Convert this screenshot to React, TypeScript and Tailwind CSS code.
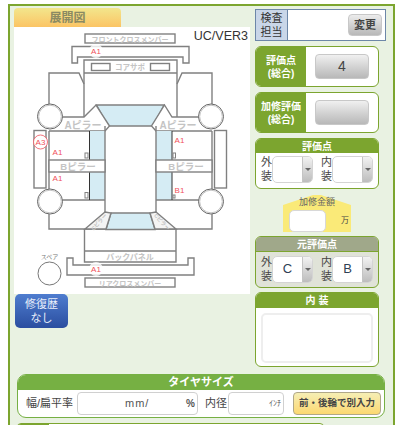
const font = { fontFamily: '"Liberation Sans", "Noto Sans CJK JP", sans-serif' };

function Select({ value }: { value?: string }) {
  return (
    <div className="flex h-[27px] w-[41px] shrink-0 overflow-hidden rounded-[5px] border border-[#d4d4d4] bg-white">
      <div className="flex flex-1 items-center justify-center text-[13px] text-[#2f3f55]">{value}</div>
      <div className="flex w-[10px] items-center justify-center border-l border-[#c4c4c4] bg-gradient-to-b from-[#f2f2f2] to-[#bdbdbd]">
        <div className="h-0 w-0 border-x-[3px] border-t-[3px] border-x-transparent border-t-[#666]" />
      </div>
    </div>
  );
}

function ScoreCard({ label, value }: { label: React.ReactNode; value?: string }) {
  return (
    <div className="flex h-[41px] w-[124px] overflow-hidden rounded-[6px] border border-[#7ca52f] bg-white">
      <div className="flex w-[50px] items-center justify-center bg-[#7ca52f] text-center text-[10px] font-bold leading-[13px] text-white">
        {label}
      </div>
      <div className="flex flex-1 items-center justify-center">
        <div className="flex h-[25px] w-[54px] items-center justify-center rounded-[4px] border border-[#c8c8c8] bg-gradient-to-b from-[#f0f0f0] to-[#b8b8b8] text-[14px] text-[#444]">
          {value}
        </div>
      </div>
    </div>
  );
}

function SelectPair({ outer, inner }: { outer?: string; inner?: string }) {
  return (
    <div className="flex items-center pl-[5px]">
      <span className="w-[11px] text-[11px] leading-[14px] text-[#444]">外装</span>
      <Select value={outer} />
      <span className="ml-[8px] w-[11px] text-[11px] leading-[14px] text-[#444]">内装</span>
      <Select value={inner} />
    </div>
  );
}

function Diagram() {
  const line = { fill: "none", stroke: "#808080", strokeWidth: 1.4 };
  const label = { fill: "#c4c4c4", fontWeight: 700, textAnchor: "middle" as const };
  const red = { fill: "#f0505a", fontSize: 8, textAnchor: "middle" as const };
  return (
    <svg width="236" height="267" viewBox="14 27 236 267" style={font}>
      {/* front */}
      <rect x="85" y="34" width="90" height="9" {...line} />
      <text x="130" y="41.5" fontSize="7" {...label}>フロントクロスメンバー</text>
      <path d="M72 63V46.5H189V63H183V57H77.5V63Z" {...line} />
      <path d="M84 118V60H177V118M84 73H177" {...line} />
      <rect x="91.5" y="63.5" width="18.5" height="7" {...line} />
      <rect x="150.5" y="63.5" width="19" height="7" {...line} />
      <text x="130" y="70" fontSize="7.5" {...label}>コアサポ</text>
      <path d="M84 84L79 73H49V104M177 84L182 73H212V104" {...line} />

      {/* windshield, pillars */}
      <path d="M96.5 105H164L153 126H108Z" fill="#d5ecf4" stroke="#808080" strokeWidth="1.4" />
      <path d="M62 117H84L96 105L109.5 126L105 131H49" fill="#fff" stroke="#808080" strokeWidth="1.4" />
      <path d="M199 117H172L164.5 105L151.5 126L156 131H212" fill="#fff" stroke="#808080" strokeWidth="1.4" />
      <text x="83" y="129" fontSize="10" {...label}>Aピラー</text>
      <text x="178" y="129" fontSize="10" {...label}>Aピラー</text>

      {/* sides */}
      <rect x="90" y="131" width="15" height="69" fill="#d5ecf4" />
      <rect x="156" y="131" width="16" height="69" fill="#d5ecf4" />
      <path d="M49 131V200H105M105 126V212M212 131V200H156M156 126V212" {...line} />
      <path d="M89.5 131V200M172 131V200" fill="none" stroke="#333" strokeWidth="1" />
      <rect x="49" y="160" width="56" height="12" fill="#fff" stroke="#808080" strokeWidth="1.4" />
      <rect x="156" y="160" width="56" height="12" fill="#fff" stroke="#808080" strokeWidth="1.4" />
      <text x="78" y="170" fontSize="9.5" {...label}>Bピラー</text>
      <text x="186" y="170" fontSize="9.5" {...label}>Bピラー</text>
      <rect x="85" y="153" width="3" height="5" fill="none" stroke="#808080" strokeWidth="1" />
      <rect x="85" y="192.5" width="3" height="5.5" fill="none" stroke="#808080" strokeWidth="1" />
      <rect x="173" y="153" width="2.5" height="5" fill="none" stroke="#808080" strokeWidth="1" />
      <rect x="173" y="195" width="2" height="3" fill="none" stroke="#808080" strokeWidth="1" />
      <rect x="34" y="130.5" width="12" height="57.5" {...line} />
      <rect x="214.5" y="130.5" width="12" height="57.5" {...line} />

      {/* wheels */}
      {[[50, 116.5], [211, 116.5], [50, 201.5], [211, 201.5]].map(([cx, cy]) => (
        <g key={`${cx}-${cy}`}>
          <circle cx={cx} cy={cy} r="12.5" fill="#fff" stroke="#666" strokeWidth="1" />
          <circle cx={cx} cy={cy} r="11.3" fill="none" stroke="#aaa" strokeWidth="0.7" />
        </g>
      ))}

      {/* rear */}
      <path d="M49 214V229H212V214" {...line} />
      <path d="M111 213H150L155 229.5H106Z" fill="#d5ecf4" stroke="#808080" strokeWidth="1.4" />
      <path d="M105 212L111 213L106 229H85Z" fill="#f4f4f4" stroke="#808080" strokeWidth="1.4" />
      <path d="M156 212L150 213L155 229H176Z" fill="#f4f4f4" stroke="#808080" strokeWidth="1.4" />
      <text x="99" y="224" fontSize="5.5" transform="rotate(-48 99 222)" {...label}>Cピラー</text>
      <text x="162" y="224" fontSize="5.5" transform="rotate(48 162 222)" {...label}>Cピラー</text>
      <path d="M84.5 229V262H176V229M84.5 251H176" {...line} />
      <text x="130" y="260" fontSize="8" {...label}>バックパネル</text>
      <path d="M67 258H73V265H188V258H194V275H67Z" fill="#fff" stroke="#808080" strokeWidth="1.4" />
      <rect x="85" y="278" width="90" height="9" {...line} />
      <text x="130" y="285.5" fontSize="7" {...label}>リアクロスメンバー</text>
      <circle cx="49.5" cy="273.5" r="11.5" fill="#fff" stroke="#777" strokeWidth="1" />
      <text x="49.5" y="259" fontSize="6" fill="#777" textAnchor="middle">スペア</text>

      {/* marks */}
      <circle cx="96" cy="51" r="7" fill="#fff" opacity="0.8" />
      <circle cx="96" cy="269" r="7" fill="#fff" opacity="0.8" />
      <text x="96" y="54" {...red}>A1</text>
      <circle cx="40.5" cy="142" r="7" fill="#fff" stroke="#f0505a" strokeWidth="0.8" />
      <text x="40.5" y="145" {...red}>A3</text>
      <text x="57.5" y="155" {...red}>A1</text>
      <text x="179.5" y="143" {...red}>A1</text>
      <text x="57.5" y="181" {...red}>A1</text>
      <text x="179.5" y="193" {...red}>B1</text>
      <text x="96" y="272" {...red}>A1</text>
    </svg>
  );
}

export default function App() {
  return (
    <div className="h-[425px] w-[402px] overflow-hidden bg-white" style={font}>
      <div className="ml-2 mt-1 h-[500px] w-[387px] border-2 border-[#7ca52f] bg-[#e9f2e2] pl-[4px] pt-[2px]">
        <div className="flex items-start">
          {/* left */}
          <div className="w-[236px]">
            <div className="flex h-[19px] w-[107px] items-center justify-center rounded-t-[4px] bg-gradient-to-b from-[#f2e68c] to-[#fbc464] text-[12px] font-bold text-[#8a8a62]">
              展開図
            </div>
            <div className="relative bg-white">
              <Diagram />
              <span className="absolute right-[2px] top-0 text-[12.5px] text-[#333]">UC/VER3</span>
            </div>
            <div className="ml-px flex h-[34px] w-[53px] flex-col items-center justify-center rounded-[5px] bg-gradient-to-b from-[#4f7dcf] to-[#2b4ea0] text-[11px] leading-[14px] text-[#e8eefa]">
              <span>修復歴</span>
              <span>なし</span>
            </div>
          </div>

          {/* right */}
          <div className="ml-[5px] flex flex-col pt-[1px]">
            <div className="flex h-[32px] w-[131px] border border-[#6d87a8] bg-white">
              <div className="flex w-[32px] items-center justify-center border-r border-[#6d87a8] bg-[#c9d6e8] text-center text-[11px] leading-[14px] text-[#333]">
                検査担当
              </div>
              <div className="flex flex-1 items-center justify-end pr-[3px]">
                <div className="flex h-[22px] w-[34px] items-center justify-center rounded-[4px] border border-[#c8c8c8] bg-gradient-to-b from-[#ececec] to-[#b8b8b8] text-[11px] font-bold text-[#444]">
                  変更
                </div>
              </div>
            </div>
            <div className="mt-[5px]">
              <ScoreCard label={<>評価点<br />(総合)</>} value="4" />
            </div>
            <div className="mt-[5px]">
              <ScoreCard label={<>加修評価<br />(総合)</>} />
            </div>

            <div className="mt-[5px] h-[51px] w-[124px] overflow-hidden rounded-[6px] border border-[#7ca52f] bg-white">
              <div className="flex h-[14px] items-center justify-center bg-[#7ca52f] text-[10px] font-bold text-white">評価点</div>
              <div className="pt-[2px]"><SelectPair /></div>
            </div>

            <div className="relative mt-[6px] ml-[28px] h-[37px] w-[68px]">
              <svg className="absolute inset-0" width="68" height="37" viewBox="0 0 68 37">
                <path d="M0 10L30 0H38L68 10V37H0Z" fill="#faea78" />
              </svg>
              <div className="relative flex h-full flex-col items-center">
                <span className="pt-[1px] text-[9px] leading-[13px] text-[#666]">加修金額</span>
                <div className="flex w-full items-center pl-[6px] pt-px">
                  <div className="h-[22px] w-[37px] rounded-[5px] border border-[#d8d8d8] bg-white" />
                  <span className="ml-[15px] text-[8px] text-[#444]">万</span>
                </div>
              </div>
            </div>

            <div className="mt-[4px] h-[52px] w-[124px] overflow-hidden rounded-[6px] border border-[#7ca52f] bg-[#e0e3d8]">
              <div className="flex h-[14px] items-center justify-center bg-[#a0a88a] text-[10px] font-bold text-white">元評価点</div>
              <div className="border-t border-[#7ca52f] pt-[3px]"><SelectPair outer="C" inner="B" /></div>
            </div>

            <div className="mt-[4px] h-[75px] w-[124px] overflow-hidden rounded-[6px] border border-[#7ca52f] bg-white">
              <div className="flex h-[15px] items-center justify-center bg-[#7ca52f] text-[10px] font-bold text-white">内 装</div>
              <div className="px-[5px] pt-[5px]">
                <div className="h-[50px] rounded-[5px] border-2 border-[#eeeeee] bg-white" />
              </div>
            </div>
          </div>
        </div>

        {/* tire size */}
        <div className="ml-[3px] mt-[7px] h-[44px] w-[368px] overflow-hidden rounded-[9px] border border-[#76b043] bg-white">
          <div className="flex h-[15px] items-center justify-center bg-[#76b043] text-[11px] font-bold text-white">タイヤサイズ</div>
          <div className="flex items-center pl-[8px] pt-[2px]">
            <span className="w-[51px] text-[11px] text-[#444]">幅/扁平率</span>
            <div className="flex h-[23px] w-[121px] items-center rounded-[4px] border border-[#d0d0d0] bg-white pr-[2px] text-[11px] text-[#555]">
              <span className="ml-[47px] tracking-[1px]">mm/</span>
              <span className="ml-auto text-[10px] font-bold">%</span>
            </div>
            <span className="ml-[7px] w-[23px] text-[11px] text-[#444]">内径</span>
            <div className="flex h-[23px] w-[56px] items-center justify-end rounded-[4px] border border-[#d0d0d0] bg-white pr-[2px] text-[8px] text-[#555]">
              ｲﾝﾁ
            </div>
            <div className="ml-[9px] flex h-[23px] w-[88px] items-center justify-center rounded-[4px] border border-[#b0a888] bg-gradient-to-b from-[#f5eeb4] to-[#fcd870] text-[9.5px] font-bold text-[#444]">
              前・後輪で別入力
            </div>
          </div>
        </div>

        {/* next section, cut off by the window */}
        <div className="ml-[3px] mt-[5px] h-[30px] w-[307px] overflow-hidden rounded-t-[4px] border border-[#7ca52f] bg-white">
          <div className="h-full w-[31px] bg-[#7ca52f]" />
        </div>
      </div>
    </div>
  );
}
